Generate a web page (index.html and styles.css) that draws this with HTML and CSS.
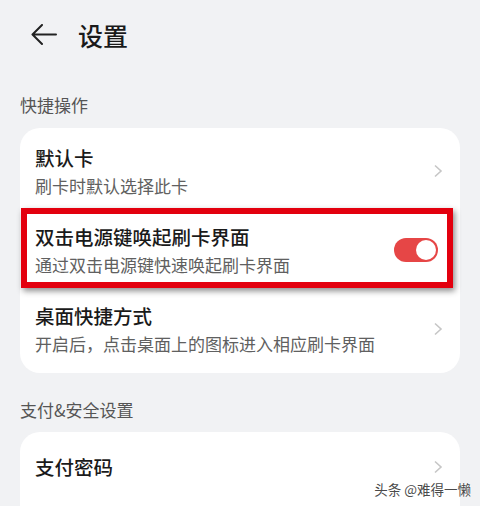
FILE: index.html
```html
<!DOCTYPE html>
<html lang="zh-CN">
<head>
  <meta charset="UTF-8">
  <meta name="viewport" content="width=device-width, initial-scale=1.0">
  <title>设置</title>
  <link rel="stylesheet" href="styles.css">
</head>
<body>
  <div class="page">
    <div class="header">
      <svg class="back" width="26" height="22" viewBox="0 0 26 22">
        <path d="M25 10.5 H2 M11 1 L1.5 10.5 L11 20" fill="none" stroke="#222" stroke-width="2" stroke-linecap="round" stroke-linejoin="round"/>
      </svg>
      <div class="title">设置</div>
    </div>

    <div class="section-label">快捷操作</div>
    <div class="card">
      <div class="row">
        <div class="row-text">
          <div class="row-title">默认卡</div>
          <div class="row-sub">刷卡时默认选择此卡</div>
        </div>
        <svg class="chevron" width="10" height="14" viewBox="0 0 10 14"><path d="M2 1.5 L8 7 L2 12.5" fill="none" stroke="#c6c6c6" stroke-width="1.6"/></svg>
      </div>
      <div class="row highlighted">
        <div class="row-text">
          <div class="row-title">双击电源键唤起刷卡界面</div>
          <div class="row-sub">通过双击电源键快速唤起刷卡界面</div>
        </div>
        <div class="toggle on"><div class="knob"></div></div>
        <div class="mark"></div>
      </div>
      <div class="row">
        <div class="row-text">
          <div class="row-title">桌面快捷方式</div>
          <div class="row-sub">开启后，点击桌面上的图标进入相应刷卡界面</div>
        </div>
        <svg class="chevron" width="10" height="14" viewBox="0 0 10 14"><path d="M2 1.5 L8 7 L2 12.5" fill="none" stroke="#c6c6c6" stroke-width="1.6"/></svg>
      </div>
    </div>

    <div class="section-label second">支付&amp;安全设置</div>
    <div class="card last">
      <div class="row single">
        <div class="row-text">
          <div class="row-title">支付密码</div>
        </div>
        <svg class="chevron" width="10" height="14" viewBox="0 0 10 14"><path d="M2 1.5 L8 7 L2 12.5" fill="none" stroke="#c6c6c6" stroke-width="1.6"/></svg>
      </div>
    </div>
  </div>
  <div class="watermark">头条 @难得一懒</div>
</body>
</html>
```

FILE: styles.css
```css
* { box-sizing: border-box; margin: 0; padding: 0; }
body {
  background: #f1f2f4;
  color: #1a1a1a;
  font-family: "Noto Sans CJK SC", "Noto Sans", sans-serif;
  height: 506px;
  overflow: hidden;
  position: relative;
}
.page {
  height: 100%;
  padding: 0 20px;
  display: flex;
  flex-direction: column;
}
.header {
  height: 70px;
  flex: none;
  display: flex;
  align-items: center;
  padding-left: 11px;
  gap: 21px;
}
.title {
  font-size: 25px;
  line-height: 32px;
  font-weight: 500;
  color: #1a1a1a;
}
.section-label {
  margin-top: 24px;
  font-size: 17px;
  line-height: 22px;
  color: #555;
  margin-bottom: 12px;
}
.section-label.second {
  margin-top: 26px;
  margin-bottom: 11px;
}
.card {
  background: #fff;
  border-radius: 20px;
  padding: 4px 0;
}
.card.last {
  flex: 1;
  border-radius: 20px 20px 0 0;
  padding-bottom: 0;
}
.row {
  position: relative;
  display: flex;
  align-items: center;
  padding: 13px 17px 14px 15px;
}
.row-text { flex: 1; }
.row-title {
  font-size: 19.5px;
  line-height: 26px;
  font-weight: 500;
  color: #1a1a1a;
}
.row-sub {
  margin-top: 4px;
  font-size: 17px;
  line-height: 22px;
  color: #606060;
}
.row.single {
  padding-top: 18px;
  padding-bottom: 18px;
}
.chevron { flex: none; }
.toggle {
  width: 44px;
  height: 24px;
  border-radius: 12px;
  background: #ccc;
  margin-right: 5px;
  padding: 2px;
  display: flex;
}
.toggle.on {
  background: #e64646;
  justify-content: flex-end;
}
.knob {
  width: 20px;
  height: 20px;
  border-radius: 50%;
  background: #fff;
}
.mark {
  position: absolute;
  left: 1px;
  top: -3px;
  width: 432px;
  height: 80px;
  border: 6px solid #e3000e;
  box-shadow: 2px 3px 6px rgba(0, 0, 0, 0.45);
  pointer-events: none;
}
.watermark {
  position: absolute;
  right: 9px;
  bottom: 9px;
  font-size: 13.5px;
  line-height: 16px;
  color: #4a4a4a;
  text-shadow: 0 0 2px #fff, 0 0 2px #fff;
}
```
